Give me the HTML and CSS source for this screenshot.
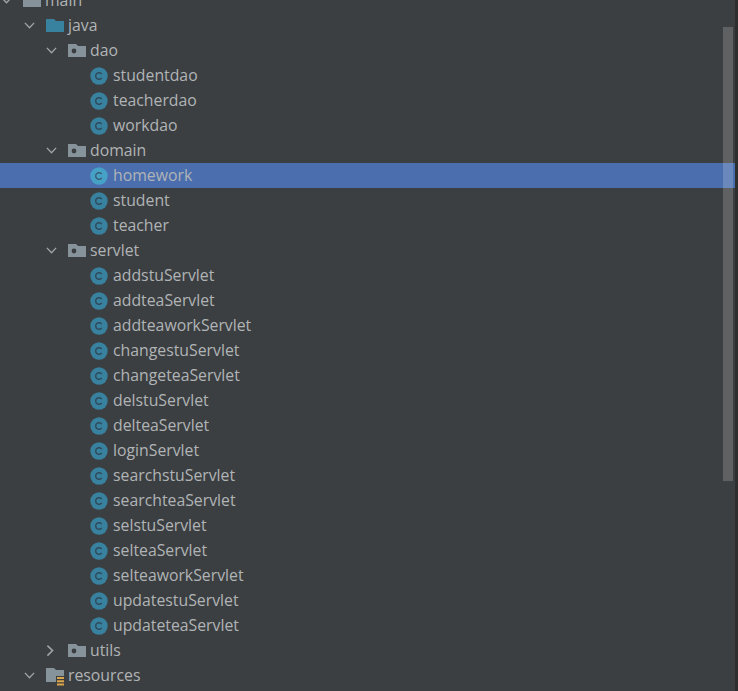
FILE: index.html
```html
<!DOCTYPE html>
<html lang="en">
<head>
  <meta charset="UTF-8" />
  <title>Project tree</title>
  <link rel="stylesheet" href="styles.css">
</head>
<body>

  <svg class="sprites" width="0" height="0">
    <symbol id="arrow-down" viewBox="0 0 12 8"><path d="M1 .6 6 5.8 11 .6" fill="none" stroke="#a0a4a7" stroke-width="1.5"/></symbol>
    <symbol id="arrow-right" viewBox="0 0 8 12"><path d="M1.4 .6 6.6 5.6 1.4 10.6" fill="none" stroke="#a0a4a7" stroke-width="1.5"/></symbol>
    <symbol id="folder" viewBox="0 0 18 13"><path d="M0 0H8L10 2H18V13H0Z"/></symbol>
    <symbol id="package" viewBox="0 0 18 13"><path d="M0 0H8L10 2H18V13H0Z" fill="#87939a"/><circle cx="6" cy="7" r="2.4" fill="#3c3f41"/></symbol>
    <symbol id="resources" viewBox="0 0 18 18"><path d="M0 0H8L10 2H18V8H10V14H0Z" fill="#87939a"/><path d="M10 8H18V18H10Z" fill="#3c3f41"/><path d="M11 10H18M11 13.3H18M11 16.6H18" stroke="#dba64a" stroke-width="2"/></symbol>
    <symbol id="class" viewBox="0 0 18 18"><circle cx="9" cy="9" r="8.7" fill="#38819f"/><path d="M11.7 7.1A3.3 3.3 0 1 0 11.7 10.9" fill="none" stroke="#2f4a5a" stroke-width="1.4"/></symbol>
  </svg>

  <div class="window">
    <main class="tree">
      <div class="row d0"><svg class="arrow"><use href="#arrow-down"/></svg><svg class="icon folder grey"><use href="#folder"/></svg><span>main</span></div>
      <div class="row d1"><svg class="arrow"><use href="#arrow-down"/></svg><svg class="icon folder blue"><use href="#folder"/></svg><span>java</span></div>

      <div class="row d2"><svg class="arrow"><use href="#arrow-down"/></svg><svg class="icon folder"><use href="#package"/></svg><span>dao</span></div>
      <div class="row d3"><svg class="icon"><use href="#class"/></svg><span>studentdao</span></div>
      <div class="row d3"><svg class="icon"><use href="#class"/></svg><span>teacherdao</span></div>
      <div class="row d3"><svg class="icon"><use href="#class"/></svg><span>workdao</span></div>

      <div class="row d2"><svg class="arrow"><use href="#arrow-down"/></svg><svg class="icon folder"><use href="#package"/></svg><span>domain</span></div>
      <div class="row d3 selected"><svg class="icon"><use href="#class"/></svg><span>homework</span></div>
      <div class="row d3"><svg class="icon"><use href="#class"/></svg><span>student</span></div>
      <div class="row d3"><svg class="icon"><use href="#class"/></svg><span>teacher</span></div>

      <div class="row d2"><svg class="arrow"><use href="#arrow-down"/></svg><svg class="icon folder"><use href="#package"/></svg><span>servlet</span></div>
      <div class="row d3"><svg class="icon"><use href="#class"/></svg><span>addstuServlet</span></div>
      <div class="row d3"><svg class="icon"><use href="#class"/></svg><span>addteaServlet</span></div>
      <div class="row d3"><svg class="icon"><use href="#class"/></svg><span>addteaworkServlet</span></div>
      <div class="row d3"><svg class="icon"><use href="#class"/></svg><span>changestuServlet</span></div>
      <div class="row d3"><svg class="icon"><use href="#class"/></svg><span>changeteaServlet</span></div>
      <div class="row d3"><svg class="icon"><use href="#class"/></svg><span>delstuServlet</span></div>
      <div class="row d3"><svg class="icon"><use href="#class"/></svg><span>delteaServlet</span></div>
      <div class="row d3"><svg class="icon"><use href="#class"/></svg><span>loginServlet</span></div>
      <div class="row d3"><svg class="icon"><use href="#class"/></svg><span>searchstuServlet</span></div>
      <div class="row d3"><svg class="icon"><use href="#class"/></svg><span>searchteaServlet</span></div>
      <div class="row d3"><svg class="icon"><use href="#class"/></svg><span>selstuServlet</span></div>
      <div class="row d3"><svg class="icon"><use href="#class"/></svg><span>selteaServlet</span></div>
      <div class="row d3"><svg class="icon"><use href="#class"/></svg><span>selteaworkServlet</span></div>
      <div class="row d3"><svg class="icon"><use href="#class"/></svg><span>updatestuServlet</span></div>
      <div class="row d3"><svg class="icon"><use href="#class"/></svg><span>updateteaServlet</span></div>

      <div class="row d2"><svg class="arrow side"><use href="#arrow-right"/></svg><svg class="icon folder"><use href="#package"/></svg><span>utils</span></div>
      <div class="row d1"><svg class="arrow"><use href="#arrow-down"/></svg><svg class="icon res"><use href="#resources"/></svg><span>resources</span></div>
    </main>
    <div class="scroll-thumb"></div>
    <div class="edge"></div>
  </div>

</body>
</html>
```
FILE: styles.css
```css
body {
  margin: 0;
  background-color: #3c3f41;
  overflow: hidden;
}

.sprites {
  display: block;
  height: 0;
}

.window {
  position: relative;
  display: flex;
  height: 691px;
  overflow: hidden;
  font-family: 'Open Sans', sans-serif;
  font-size: 15.8px;
  color: #b0b4b6;
}

.tree {
  flex: 1;
  margin-top: -12px;
}

.edge {
  width: 3px;
  background-color: #2e2e2e;
}

/* Ряды дерева */
.row {
  display: flex;
  align-items: center;
  height: 25px;
  white-space: nowrap;
}
.row span {
  margin-bottom: 2px;
}
.row.selected {
  background-color: #4b6eaf;
}
.row.selected .icon {
  filter: brightness(1.25);
}

.d0 { padding-left: 1px; }
.d1 { padding-left: 24px; }
.d2 { padding-left: 46px; }
.d3 { padding-left: 90px; }

.d0 .icon,
.d1 .icon,
.d2 .icon {
  margin-right: 4px;
}

.arrow {
  width: 11px;
  height: 8px;
  margin-right: 11px;
}
.arrow.side {
  width: 8px;
  height: 12px;
  margin-right: 14px;
}

.icon {
  width: 18px;
  height: 18px;
  margin-right: 5px;
  flex-shrink: 0;
}
.icon.folder {
  height: 13px;
}
.icon.res {
  margin-top: 3px;
}
.grey { fill: #87939a; }
.blue { fill: #38819f; }

.scroll-thumb {
  position: absolute;
  top: 27px;
  right: 5px;
  width: 10px;
  height: 454px;
  background-color: rgba(255, 255, 255, 0.18);
}
```
